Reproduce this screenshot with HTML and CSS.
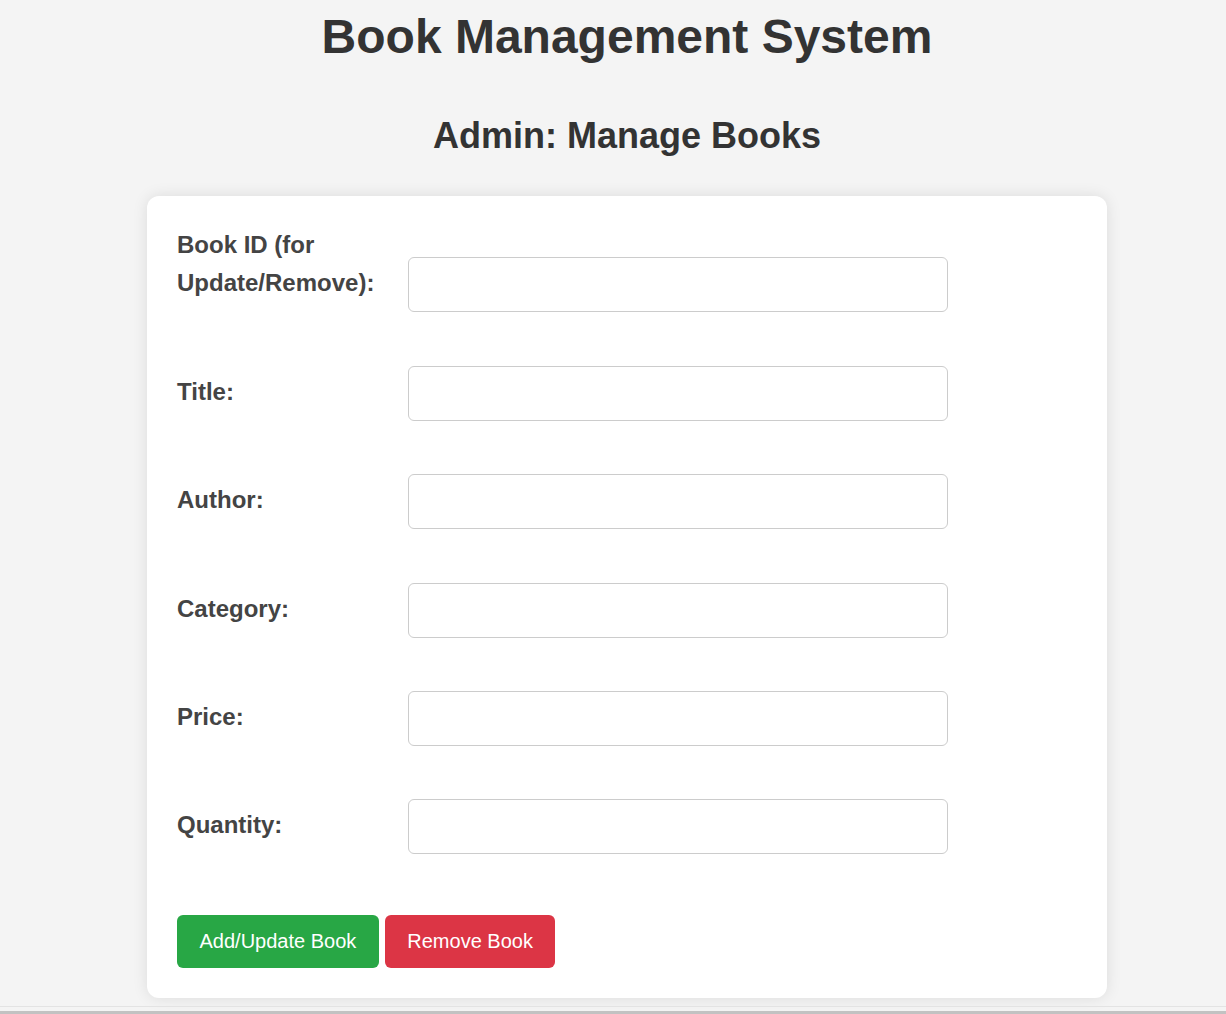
FILE: index.html
```html
<!DOCTYPE html>
<html lang="en">
<head>
<meta charset="utf-8">
<title>Book Management System</title>
<link rel="stylesheet" href="styles.css">
</head>
<body>
<main class="page">
  <h1 class="title">Book Management System</h1>
  <h2 class="subtitle">Admin: Manage Books</h2>
  <form class="card">
    <div class="row"><label class="label" for="bookId">Book ID (for Update/Remove):</label> <input class="field" id="bookId" type="text"></div>
    <div class="row"><label class="label" for="title">Title:</label> <input class="field" id="title" type="text"></div>
    <div class="row"><label class="label" for="author">Author:</label> <input class="field" id="author" type="text"></div>
    <div class="row"><label class="label" for="category">Category:</label> <input class="field" id="category" type="text"></div>
    <div class="row"><label class="label" for="price">Price:</label> <input class="field" id="price" type="text"></div>
    <div class="row"><label class="label" for="quantity">Quantity:</label> <input class="field" id="quantity" type="text"></div>
    <div class="actions">
      <button type="button" class="btn btn-green">Add/Update Book</button>
      <button type="button" class="btn btn-red">Remove Book</button>
    </div>
  </form>
</main>
<footer class="bar"></footer>
</body>
</html>
```
FILE: styles.css
```css
html, body {
  margin: 0;
  padding: 0;
}
body {
  background: #f4f4f4;
  font-family: "Liberation Sans", Arial, sans-serif;
  font-size: 24px;
  line-height: 1.6;
  color: #333;
}
.page {
  padding: 9px 0 0 28px;
}
.title {
  margin: 0;
  font-size: 48px;
  line-height: 55px;
  font-weight: bold;
  text-align: center;
  color: #333;
}
.subtitle {
  margin: 51px 0 0;
  font-size: 36px;
  line-height: 41px;
  font-weight: bold;
  text-align: center;
  color: #333;
}
.card {
  box-sizing: border-box;
  width: 960px;
  margin: 40px auto 0;
  padding: 30px;
  background: #fff;
  border-radius: 12px;
  box-shadow: 0 0 15px rgba(0, 0, 0, 0.1);
}
.row {
  margin-bottom: 53.4px;
}
.label {
  display: inline-block;
  width: 224.4px;
  font-weight: bold;
  color: #444;
  line-height: 38.4px;
  vertical-align: baseline;
}
.field {
  display: inline-block;
  box-sizing: border-box;
  width: 540px;
  padding: 15px;
  font-family: "Liberation Sans", Arial, sans-serif;
  font-size: 20px;
  line-height: 23px;
  border: 1px solid #ccc;
  border-radius: 6px;
  background: #fff;
  vertical-align: baseline;
  outline: none;
}
.row:last-of-type {
  margin-bottom: 0;
}
.actions {
  display: flex;
  gap: 6px;
  margin-top: 61px;
}
.btn {
  padding: 15px 22.5px;
  border: none;
  border-radius: 6px;
  color: #fff;
  font-family: "Liberation Sans", Arial, sans-serif;
  font-size: 20px;
  line-height: 23px;
  cursor: pointer;
}
.btn-green {
  background: #28a745;
}
.btn-red {
  background: #dc3545;
}
.bar {
  margin-top: 8px;
  height: 4px;
  border-top: 1px solid #e3e3e3;
  border-bottom: 4px solid #c2c2c2;
}
```
